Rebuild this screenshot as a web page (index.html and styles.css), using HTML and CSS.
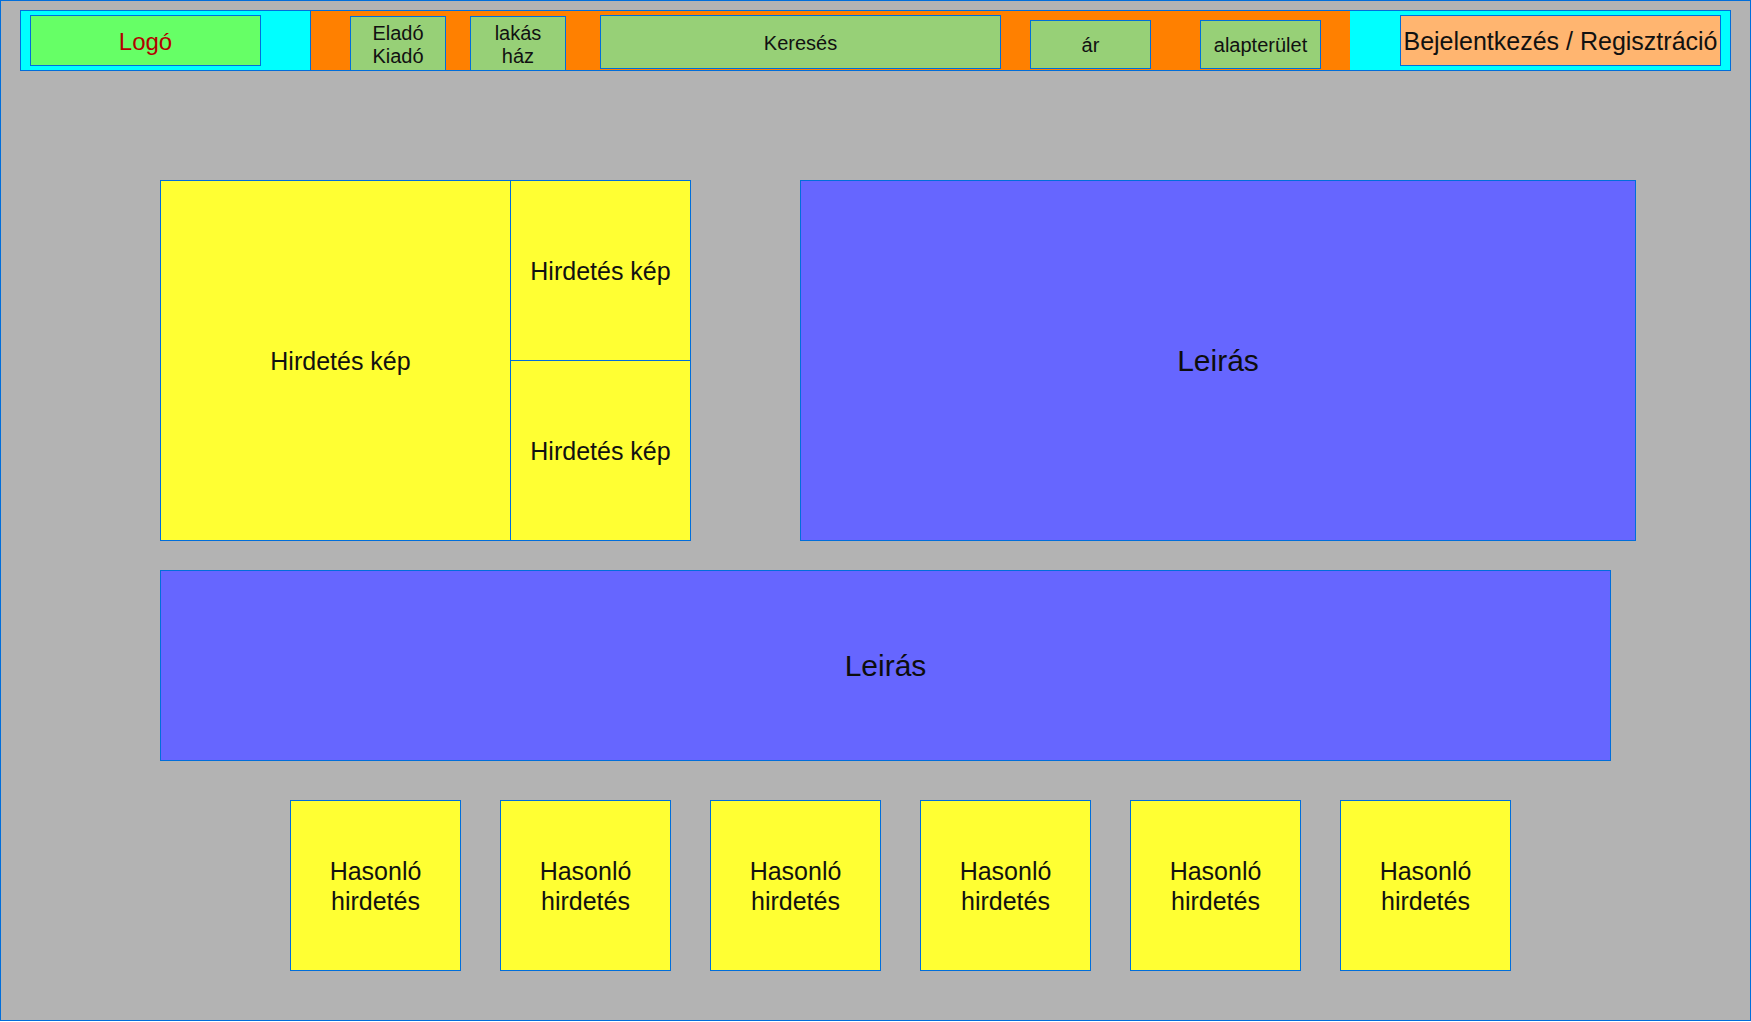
FILE: index.html
```html
<!DOCTYPE html>
<html lang="hu">
<head>
<meta charset="utf-8">
<title>Hirdetés</title>
<link rel="stylesheet" href="styles.css">
</head>
<body>
<div class="frame">
  <header class="header">
    <div class="sec-left">
      <div class="box logo">Logó</div>
    </div>
    <nav class="sec-mid">
      <div class="box btn toggle first">Eladó<br>Kiadó</div>
      <div class="box btn toggle second">lakás<br>ház</div>
      <div class="box btn search">Keresés</div>
      <div class="box btn filter price">ár</div>
      <div class="box btn filter area">alapterület</div>
    </nav>
    <div class="sec-right">
      <div class="box login">Bejelentkezés / Regisztráció</div>
    </div>
  </header>

  <section class="row-top">
    <div class="gallery">
      <div class="img img-main">Hirdetés kép</div>
      <div class="img">Hirdetés kép</div>
      <div class="img">Hirdetés kép</div>
    </div>
    <div class="box desc desc-side">Leirás</div>
  </section>

  <div class="box desc desc-wide">Leirás</div>

  <section class="similar">
    <div class="box card">Hasonló<br>hirdetés</div>
    <div class="box card">Hasonló<br>hirdetés</div>
    <div class="box card">Hasonló<br>hirdetés</div>
    <div class="box card">Hasonló<br>hirdetés</div>
    <div class="box card">Hasonló<br>hirdetés</div>
    <div class="box card">Hasonló<br>hirdetés</div>
  </section>
</div>
</body>
</html>
```

FILE: styles.css
```css
html, body {
  margin: 0;
  padding: 0;
  background: #ffffff;
}

body {
  font-family: "Liberation Sans", Arial, sans-serif;
  color: #111111;
}

.frame {
  box-sizing: border-box;
  width: 1751px;
  height: 1021px;
  border: 1px solid #006edb;
  background: #b3b3b3;
  padding: 9px 0 0 19px;
  display: flex;
  flex-direction: column;
  align-items: flex-start;
}

.box {
  box-sizing: border-box;
  border: 1px solid #006edb;
  display: flex;
  align-items: center;
  justify-content: center;
  text-align: center;
  flex: none;
}

/* header */
.header {
  box-sizing: border-box;
  width: 1711px;
  height: 61px;
  border: 1px solid #006edb;
  display: flex;
  flex: none;
}

.sec-left {
  box-sizing: border-box;
  width: 289px;
  background: #00ffff;
  display: flex;
  align-items: flex-start;
  padding-left: 9px;
}

.logo {
  width: 231px;
  height: 51px;
  margin-top: 4px;
  padding-top: 2px;
  background: #66ff66;
  color: #b30000;
  font-size: 24px;
}

.sec-mid {
  box-sizing: border-box;
  width: 1040px;
  border-left: 1px solid #006edb;
  background: #ff8000;
  display: flex;
  align-items: flex-start;
}

.btn {
  background: #97d077;
  font-size: 20px;
  line-height: 23px;
  padding-top: 2px;
}

.toggle {
  width: 96px;
  height: 55px;
  margin-top: 5px;
}

.toggle.first { margin-left: 39px; }
.toggle.second { margin-left: 24px; }

.search {
  width: 401px;
  height: 54px;
  margin-top: 4px;
  margin-left: 34px;
}

.filter {
  width: 121px;
  height: 49px;
  margin-top: 9px;
}

.filter.price { margin-left: 29px; }
.filter.area { margin-left: 49px; }

.sec-right {
  flex: 1;
  background: #00ffff;
  display: flex;
  align-items: flex-start;
}

.login {
  width: 321px;
  height: 51px;
  margin-top: 4px;
  margin-left: 50px;
  padding-top: 2px;
  background: #ffb570;
  font-size: 25px;
  white-space: nowrap;
}

/* top row */
.row-top {
  display: flex;
  gap: 109px;
  margin-top: 109px;
  margin-left: 140px;
  flex: none;
}

.gallery {
  box-sizing: border-box;
  width: 531px;
  height: 361px;
  border: 1px solid #006edb;
  background: #006edb;
  display: grid;
  grid-template-columns: 349px 179px;
  grid-template-rows: 179px 179px;
  gap: 1px;
}

.img {
  box-sizing: border-box;
  background: #ffff33;
  display: flex;
  align-items: center;
  justify-content: center;
  font-size: 25px;
  padding-top: 2px;
}

.img-main {
  grid-row: 1 / span 2;
  padding-left: 10px;
}

.desc {
  background: #6666ff;
  font-size: 30px;
  color: #0d0d0d;
}

.desc-side {
  width: 836px;
  height: 361px;
}

.desc-wide {
  width: 1451px;
  height: 191px;
  margin-top: 29px;
  margin-left: 140px;
}

/* similar ads */
.similar {
  display: flex;
  gap: 39px;
  margin-top: 39px;
  margin-left: 270px;
  flex: none;
}

.card {
  width: 171px;
  height: 171px;
  background: #ffff33;
  font-size: 25px;
  line-height: 30px;
}
```
